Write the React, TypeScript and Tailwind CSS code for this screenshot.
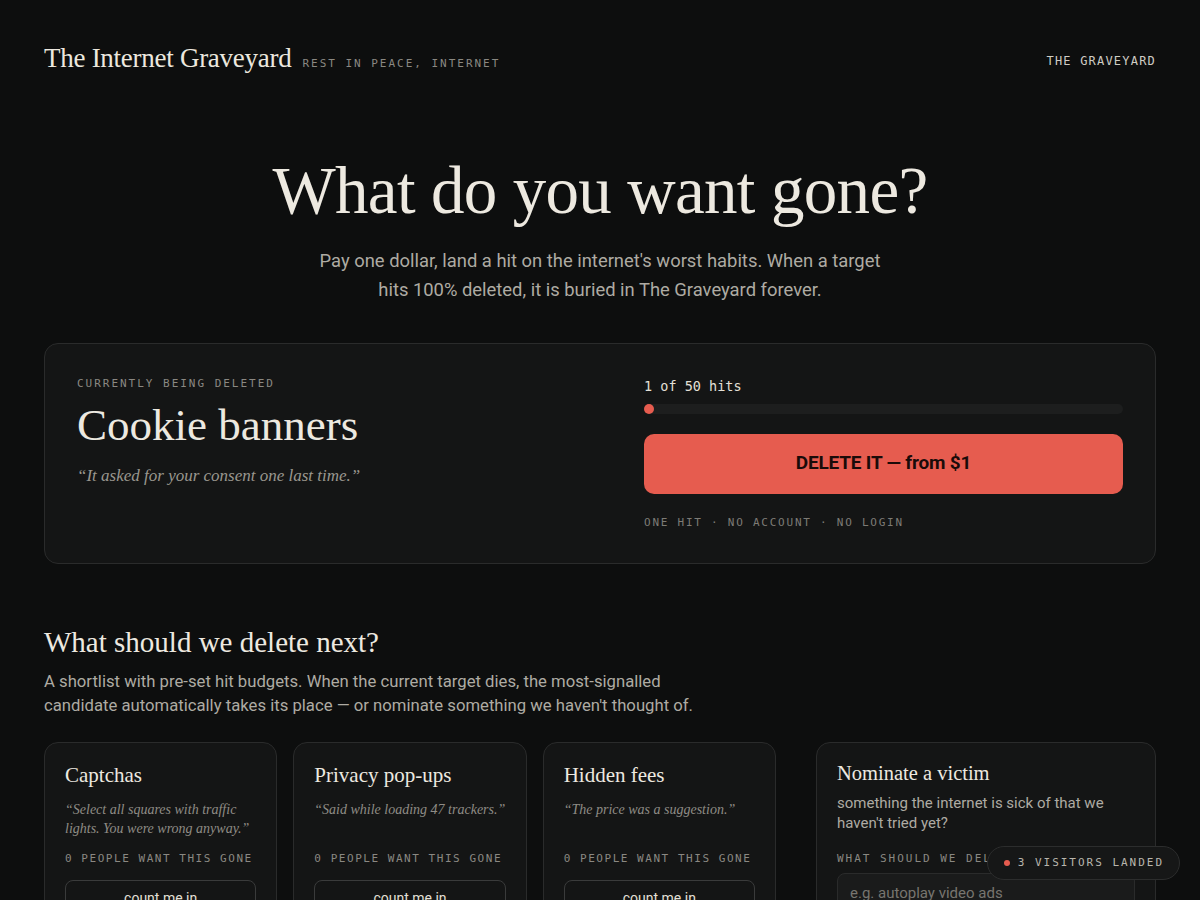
import React from "react";

const serif = "font-['Liberation_Serif',serif]";
const mono = "font-['DejaVu_Sans_Mono',monospace]";

const candidates = [
  { title: "Captchas", quote: "“Select all squares with traffic lights. You were wrong anyway.”" },
  { title: "Privacy pop-ups", quote: "“Said while loading 47 trackers.”" },
  { title: "Hidden fees", quote: "“The price was a suggestion.”" },
];

export default function App() {
  return (
    <div className="min-h-screen bg-[#0d0e0e] text-[#ece8df] font-['Roboto',sans-serif]">
      <header className="flex items-center justify-between px-11 pt-[45px]">
        <div className="flex items-baseline gap-[11px]">
          <span className={`${serif} text-[27px] leading-none text-[#ece8df] tracking-[-0.01em]`}>The Internet Graveyard</span>
          <span className={`${mono} text-[11px] tracking-[0.18em] text-[#8a8882]`}>REST IN PEACE, INTERNET</span>
        </div>
        <span className={`${mono} text-[12px] tracking-[0.1em] text-[#cfccc4] mt-[5px]`}>THE GRAVEYARD</span>
      </header>

      <section className="flex flex-col items-center px-11 pt-[84px]">
        <h1 className={`${serif} text-[67px] leading-none tracking-[-0.01em] text-[#ede9e0]`}>What do you want gone?</h1>
        <p className="mt-[22px] max-w-[580px] text-center text-[18.4px] leading-[29px] text-[#aeaba3]">
          Pay one dollar, land a hit on the internet's worst habits. When a target hits 100% deleted, it is buried in The Graveyard forever.
        </p>
      </section>

      <div className="px-11 mt-[39px]">
        <div className="grid grid-cols-[1fr_479px] gap-[40px] rounded-[14px] border border-[#2a2b2b] bg-[#141515] px-8 pt-8 pb-8">
          <div className="flex flex-col">
            <div className={`${mono} text-[11px] leading-4 tracking-[0.18em] text-[#8a8882]`}>CURRENTLY BEING DELETED</div>
            <div className={`${serif} mt-[9px] text-[45px] leading-[1.1] text-[#ede9e0]`}>Cookie banners</div>
            <div className={`${serif} mt-[14px] text-[17px] italic leading-6 text-[#9a978f]`}>“It asked for your consent one last time.”</div>
          </div>
          <div className="flex flex-col">
            <div className={`${mono} text-[13.5px] leading-5 text-[#e4e0d7]`}>1 of 50 hits</div>
            <div className="mt-2 h-[10px] w-full rounded-full bg-[#1d1e1e]">
              <div className="h-[10px] rounded-full bg-[#e65c4f]" style={{ width: "2%" }} />
            </div>
            <button className="mt-5 h-[60px] w-full rounded-[10px] bg-[#e65c4f] text-[19px] font-bold tracking-[-0.01em] text-[#1a0b09]">
              DELETE IT — from $1
            </button>
            <div className={`${mono} mt-[21px] text-[11px] leading-4 tracking-[0.16em] text-[#7d7b75]`}>ONE HIT · NO ACCOUNT · NO LOGIN</div>
          </div>
        </div>
      </div>

      <section className="px-11 mt-[61px] pb-16">
        <h2 className={`${serif} text-[29px] leading-[1.2] text-[#ede9e0]`}>What should we delete next?</h2>
        <p className="mt-[11px] max-w-[660px] text-[16.7px] leading-6 text-[#aeaba3]">
          A shortlist with pre-set hit budgets. When the current target dies, the most-signalled candidate automatically takes its place — or nominate something we haven't thought of.
        </p>

        <div className="mt-[24px] grid grid-cols-[1fr_340px] items-start gap-10">
          <div className="grid grid-cols-3 gap-4">
            {candidates.map((c) => (
              <div key={c.title} className="flex flex-col rounded-[14px] border border-[#2a2b2b] bg-[#141515] px-5 pt-[20px] pb-5">
                <div className={`${serif} text-[21px] leading-[1.2] text-[#ede9e0]`}>{c.title}</div>
                <div className={`${serif} mt-[12px] min-h-[38px] text-[14px] italic leading-[19px] text-[#8f8c85]`}>{c.quote}</div>
                <div className={`${mono} mt-[13px] text-[11px] leading-4 tracking-[0.14em] text-[#8a8882]`}>0 PEOPLE WANT THIS GONE</div>
                <button className="mt-[13px] h-9 w-full rounded-lg border border-[#3a3b3b] text-[14px] text-[#e4e0d7]">count me in</button>
              </div>
            ))}
          </div>
          <div className="flex flex-col rounded-[14px] border border-[#2a2b2b] bg-[#141515] px-5 pt-[18px] pb-5">
            <div className={`${serif} text-[20.5px] leading-[1.2] text-[#ede9e0]`}>Nominate a victim</div>
            <div className="mt-[7px] text-[15px] leading-5 text-[#aeaba3]">something the internet is sick of that we haven't tried yet?</div>
            <div className={`${mono} mt-[18px] text-[11px] leading-4 tracking-[0.18em] text-[#8a8882]`}>WHAT SHOULD WE DELETE?</div>
            <input
              className="mt-[6px] h-10 w-full rounded-lg border border-[#2a2b2b] bg-[#1a1b1b] px-3 text-[15px] text-[#e4e0d7] placeholder:text-[#77756f] outline-none"
              placeholder="e.g. autoplay video ads"
            />
            <button className="mt-3 h-10 w-full rounded-lg bg-[#e65c4f] text-[14px] font-bold text-[#1a0b09]">Nominate</button>
          </div>
        </div>
      </section>

      <div className="fixed bottom-5 right-5 flex h-[34px] items-center gap-[8px] rounded-full border border-[#2c2d2d] bg-[#161717] pl-[16px] pr-[15px]">
        <span className="h-[6px] w-[6px] rounded-full bg-[#e65c4f]" />
        <span className={`${mono} text-[11px] tracking-[0.18em] text-[#b8b5ad]`}>3 VISITORS LANDED</span>
      </div>
    </div>
  );
}
